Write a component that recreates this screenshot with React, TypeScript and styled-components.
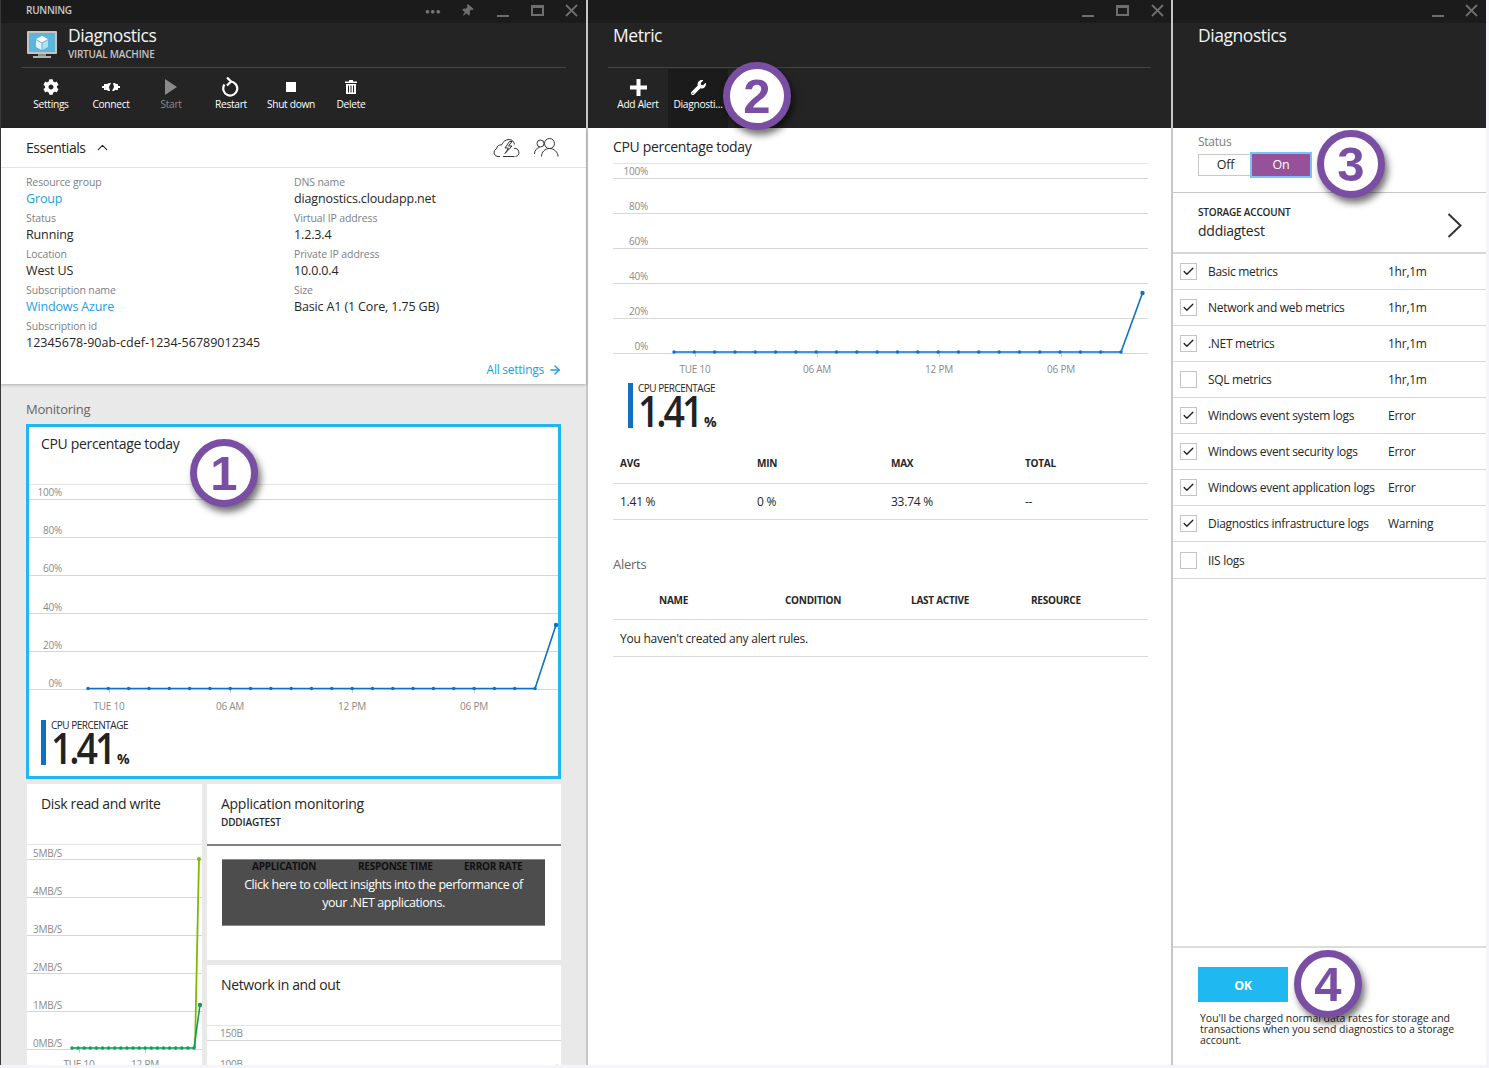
import React from 'react';
import styled, { createGlobalStyle } from 'styled-components';
import { FaCog, FaThumbtack, FaWrench } from 'react-icons/fa';
import { ChevronUp, ArrowRight, Check } from 'lucide-react';

const FONT = `"Open Sans", "Noto Sans", "Liberation Sans", sans-serif`;

const Global = createGlobalStyle`
  html, body { margin: 0; padding: 0; background: #f4f4fa; font-family: ${FONT}; }
  * { box-sizing: border-box; }
`;

const Page = styled.div`
  position: relative;
  display: flex;
  width: 1489px;
  height: 1065px;
  overflow: hidden;
  letter-spacing: -0.25px;
  color: #262626;
`;

const Blade = styled.section<{ $w: number; $edge?: boolean }>`
  width: ${p => p.$w}px;
  flex: none;
  display: flex;
  flex-direction: column;
  height: 100%;
  background: #fff;
  border-left: ${p => (p.$edge ? '1px solid #3a3a3a' : '2px solid #c6c6c6')};
`;

const Header = styled.header`
  height: 128px;
  flex: none;
  background: #242424;
  display: flex;
  flex-direction: column;
`;

const TopBar = styled.div<{ $pad: number }>`
  height: 23px;
  background: #1b1b1b;
  display: flex;
  align-items: center;
  padding-left: ${p => p.$pad}px;
  color: #c8c8c8;
  font-size: 10px;
  font-weight: 600;
`;

const RunningText = styled.span`
  margin-top: -4px;
`;

const WindowControls = styled.div`
  margin-left: auto;
  display: flex;
  align-items: center;
  color: #6e6e6e;
`;

const Control = styled.span<{ $w: number }>`
  width: ${p => p.$w}px;
  height: 23px;
  margin-top: -2px;
  display: flex;
  align-items: center;
  justify-content: center;
`;

const Dots = styled.span`
  font-size: 8px;
  letter-spacing: 0.5px;
  color: #777;
`;

const MinBar = styled.span`
  width: 12px;
  height: 2px;
  margin-top: 10px;
  background: #6e6e6e;
`;

const MaxBox = styled.span`
  width: 13px;
  height: 11px;
  border: 2px solid #6e6e6e;
  border-top-width: 3px;
`;

const TitleRow = styled.div<{ $line?: boolean }>`
  height: 45px;
  margin: 0 20px 0 20px;
  padding-left: 5px;
  border-bottom: 1px solid ${p => (p.$line === false ? 'transparent' : '#444')};
  display: flex;
  gap: 10px;
  color: #fff;
`;

const TitleText = styled.div`
  display: flex;
  flex-direction: column;
  margin-top: -1px;
`;

const VmIconWrap = styled.span`
  display: block;
  height: 30px;
  margin-top: 6px;
`;

const Title = styled.div`
  font-size: 17.5px;
  line-height: 26px;
  color: #f4f4f4;
  letter-spacing: -0.45px;
`;

const Subtitle = styled.div`
  font-size: 10px;
  line-height: 10px;
  margin-top: 1px;
  font-weight: 600;
  color: #c4c4c4;
  letter-spacing: -0.2px;
`;

const Toolbar = styled.div<{ $left: number }>`
  flex: 1;
  display: flex;
  padding-left: ${p => p.$left}px;
  padding-top: 1px;
`;

const ToolButton = styled.div<{ $active?: boolean; $muted?: boolean }>`
  width: 60px;
  display: flex;
  flex-direction: column;
  align-items: center;
  background: ${p => (p.$active ? '#1b1b1b' : 'transparent')};
  color: ${p => (p.$muted ? '#8a8a8a' : '#fff')};
`;

const ToolIcon = styled.span`
  height: 20px;
  margin-top: 8px;
  display: flex;
  align-items: center;
  justify-content: center;
`;

const ToolLabel = styled.span`
  font-size: 10.2px;
  line-height: 14px;
  white-space: nowrap;
  letter-spacing: -0.3px;
`;

const Essentials = styled.div`
  height: 256px;
  flex: none;
  background: #fff;
  box-shadow: 0 1px 3px rgba(0, 0, 0, 0.25);
  display: flex;
  flex-direction: column;
  position: relative;
`;

const EssHead = styled.div`
  height: 40px;
  flex: none;
  border-bottom: 1px solid #e2e2e8;
  display: flex;
  align-items: center;
  padding: 0 27px 0 25px;
  font-size: 14px;
  letter-spacing: -0.45px;
  gap: 8px;
`;

const EssIcons = styled.div`
  margin-left: auto;
  display: flex;
  align-items: center;
  gap: 14px;
  color: #333;
`;

const PropGrid = styled.div`
  display: grid;
  grid-template-columns: 268px 1fr;
  padding: 7px 25px 0;
`;

const PropCol = styled.div`
  display: flex;
  flex-direction: column;
`;

const PropItem = styled.div`
  height: 36px;
  display: flex;
  flex-direction: column;
`;

const PropLabel = styled.span`
  font-size: 10.5px;
  line-height: 14px;
  letter-spacing: -0.12px;
  color: #7c8088;
`;

const PropValue = styled.span<{ $link?: boolean; $wide?: boolean }>`
  font-size: 12.5px;
  line-height: 18px;
  margin-top: 1px;
  letter-spacing: ${p => (p.$wide ? '0' : '-0.14px')};
  color: ${p => (p.$link ? '#1ba1e2' : '#262626')};
`;

const AllSettings = styled.div`
  margin-top: auto;
  padding: 0 24px 7px 0;
  display: flex;
  justify-content: flex-end;
  align-items: center;
  gap: 4px;
  font-size: 12px;
  line-height: 14px;
  color: #1ba1e2;
`;

const Monitoring = styled.div`
  flex: 1;
  background: #e9e9e9;
  padding: 0 0 0 25px;
  min-height: 0;
  overflow: hidden;
`;

const SectionTitle = styled.div`
  height: 40px;
  padding-top: 15px;
  font-size: 13px;
  line-height: 20px;
  color: #666;
`;

const Tile = styled.div`
  background: #fff;
`;

const SelectedTile = styled(Tile)`
  width: 535px;
  height: 355px;
  border: 3px solid #1fb8f0;
`;

const TileTitle = styled.div`
  font-size: 14px;
  line-height: 20px;
  padding: 7px 12px 0;
  letter-spacing: -0.33px;
  color: #262626;
`;

const TileHead = styled.div`
  height: 57px;
  flex: none;
`;

const LowerGrid = styled.div`
  display: grid;
  grid-template-columns: 175px 354px;
  grid-template-rows: 176px 1fr;
  gap: 5px;
  margin: 5px 0 0 1px;
  height: 290px;
`;

const DiskTile = styled(Tile)`
  grid-row: 1 / 3;
  overflow: hidden;
`;

const DiskHead = styled.div`
  height: 60px;
  padding: 10px 14px 0;
  font-size: 14px;
  line-height: 20px;
  letter-spacing: -0.36px;
`;

const AppHead = styled.div`
  height: 62px;
  border-bottom: 2px solid #808080;
  padding: 10px 14px 0;
  font-size: 14px;
  line-height: 20px;
  letter-spacing: -0.28px;
`;

const AppSub = styled.div`
  font-size: 10px;
  font-weight: 600;
  line-height: 14px;
  margin-top: 1px;
  letter-spacing: -0.15px;
`;

const InsightBox = styled.div`
  margin: 13px 16px 0 15px;
  height: 67px;
  background: #4d4d4d;
  border-top: 1px solid #8a8a8a;
  border-bottom: 1px solid #8a8a8a;
  text-align: center;
  color: #fff;
  font-size: 12.5px;
  line-height: 18px;
`;

const InsightCols = styled.div`
  display: flex;
  height: 12px;
  padding-left: 30px;
  color: #111;
  font-size: 10px;
  line-height: 12px;
  font-weight: 700;
`;

const InsightCol = styled.span<{ $w: number }>`
  width: ${p => p.$w}px;
  flex: none;
  text-align: left;
  white-space: nowrap;
`;

const InsightMsg = styled.div`
  padding: 4px 15px 0;
  letter-spacing: -0.45px;
`;

const NetTile = styled(Tile)`
  overflow: hidden;
`;

const ChartSvg = styled.svg`
  display: block;
  overflow: hidden;
  text {
    font-family: ${FONT};
    font-size: 10px;
    fill: #8a8a8a;
  }
`;

const Legend = styled.div`
  display: flex;
  gap: 5px;
  height: 45px;
`;

const LegendBar = styled.div`
  width: 5px;
  height: 45px;
  background: #1070c4;
`;

const LegendBody = styled.div`
  display: flex;
  flex-direction: column;
`;

const LegendLabel = styled.div`
  font-size: 10px;
  line-height: 11px;
  letter-spacing: -0.5px;
  color: #262626;
`;

const LegendValue = styled.div`
  display: flex;
  align-items: baseline;
  height: 34px;
  color: #222;
  white-space: nowrap;
`;

const LegendDigits = styled.span`
  display: inline-block;
  width: 66px;
  font-size: 43px;
  line-height: 34px;
  font-weight: 600;
  letter-spacing: -3.5px;
  transform: scaleX(0.87);
  transform-origin: left center;
`;

const LegendUnit = styled.span`
  font-size: 14px;
  font-weight: 700;
  letter-spacing: 0;
`;

const TileLegend = styled.div`
  padding: 8px 0 0 12px;
`;

const MetricBody = styled.div`
  flex: 1;
  padding: 0 23px 0 25px;
  display: flex;
  flex-direction: column;
`;

const MetricTitle = styled.div`
  height: 35px;
  padding-top: 9px;
  font-size: 14px;
  line-height: 20px;
  letter-spacing: -0.33px;
`;

const MetricLegend = styled.div`
  padding: 5px 0 0 15px;
`;

const DataTable = styled.div<{ $mt: number }>`
  margin-top: ${p => p.$mt}px;
`;

const DataRow = styled.div<{ $h: number; $head?: boolean; $cols: string; $pl: number }>`
  height: ${p => p.$h}px;
  display: grid;
  grid-template-columns: ${p => p.$cols};
  align-items: center;
  padding-left: ${p => p.$pl}px;
  padding-bottom: ${p => (p.$head ? 2 : 0)}px;
  border-bottom: 1px solid #d9d9d9;
  font-size: ${p => (p.$head ? 10 : 12)}px;
  font-weight: ${p => (p.$head ? 700 : 400)};
`;

const AlertsTitle = styled.div`
  margin-top: 35px;
  font-size: 13px;
  line-height: 18px;
  color: #666;
`;

const DiagBody = styled.div`
  flex: 1;
  display: flex;
  flex-direction: column;
  min-height: 0;
`;

const StatusPanel = styled.div`
  height: 65px;
  flex: none;
  padding: 7px 0 0 25px;
  border-bottom: 1px solid #c8c8c8;
`;

const StatusLabel = styled.div`
  font-size: 12px;
  line-height: 14px;
  color: #7c7c7c;
`;

const Toggle = styled.div`
  display: flex;
  margin-top: 5px;
  height: 22px;
`;

const ToggleOff = styled.div`
  width: 54px;
  border: 1px solid #c8c8c8;
  border-right: none;
  font-size: 12.5px;
  line-height: 20px;
  text-align: center;
`;

const ToggleOn = styled.div`
  width: 58px;
  background: #97509a;
  color: #fff;
  font-size: 12.5px;
  line-height: 22px;
  text-align: center;
  box-shadow: 0 0 0 2px #7cc3f5;
`;

const StoragePanel = styled.div`
  height: 61px;
  flex: none;
  padding: 12px 24px 0 25px;
  border-bottom: 2px solid #d6d6d6;
  display: flex;
  align-items: flex-start;
  justify-content: space-between;
`;

const StorageLabel = styled.div`
  font-size: 10px;
  line-height: 14px;
  font-weight: 600;
  letter-spacing: -0.2px;
`;

const StorageValue = styled.div`
  font-size: 14px;
  line-height: 20px;
  margin-top: 2px;
`;

const StorageChevron = styled.span`
  display: block;
  margin-top: 8px;
  color: #333;
`;

const CheckRow = styled.div<{ $last?: boolean }>`
  height: ${p => (p.$last ? 37 : 36)}px;
  flex: none;
  display: flex;
  align-items: center;
  padding-left: 7px;
  border-bottom: 1px solid #d6d6d6;
  font-size: 12px;
`;

const CheckBox = styled.span`
  width: 17px;
  height: 17px;
  flex: none;
  border: 1px solid #c4c4c4;
  display: flex;
  align-items: center;
  justify-content: center;
  color: #222;
`;

const CheckLabel = styled.span`
  width: 180px;
  margin-left: 11px;
  flex: none;
  white-space: nowrap;
  letter-spacing: -0.3px;
`;

const Footer = styled.div`
  margin-top: auto;
  height: 119px;
  flex: none;
  border-top: 2px solid #dcdcdc;
  padding: 19px 24px 0 25px;
`;

const OkButton = styled.div`
  width: 90px;
  height: 35px;
  background: #1fb8f0;
  color: #fff;
  font-size: 12.5px;
  font-weight: 700;
  line-height: 37px;
  text-align: center;
`;

const Note = styled.div`
  margin: 11px 0 0 2px;
  font-size: 10.5px;
  line-height: 11px;
  letter-spacing: -0.03px;
  width: 270px;
  color: #262626;
`;

const Badge = styled.div<{ $x: number; $y: number }>`
  position: absolute;
  left: ${p => p.$x - 34}px;
  top: ${p => p.$y - 34}px;
  width: 68px;
  height: 68px;
  border-radius: 50%;
  background: #fff;
  border: 7px solid #7a4fa3;
  box-shadow: 3px 5px 7px rgba(0, 0, 0, 0.55);
  color: #7a4fa3;
  font-family: "Liberation Sans", sans-serif;
  font-size: 49px;
  font-weight: 700;
  line-height: 54px;
  text-align: center;
  letter-spacing: 0;
`;

type ChartProps = {
  w: number;
  h: number;
  grid: number[];
  labels: { t: string; y: number }[];
  labelX: number;
  anchor?: 'start' | 'end';
  xLabels: { t: string; x: number }[];
  xY: number;
  base: number;
  children?: React.ReactNode;
};

const Chart = ({ w, h, grid, labels, labelX, anchor = 'end', xLabels, xY, base, children }: ChartProps) => (
  <ChartSvg width={w} height={h} viewBox={`0 0 ${w} ${h}`}>
    {grid.map((y, i) => (
      <line key={i} x1={0} x2={w} y1={y + 0.5} y2={y + 0.5} stroke={i === 0 ? '#e6e6e6' : '#d6d6d6'} strokeWidth={1} />
    ))}
    {labels.map(l => (
      <text key={l.t} x={labelX} y={l.y} textAnchor={anchor}>
        {l.t}
      </text>
    ))}
    {xLabels.map(l => (
      <g key={l.t}>
        <line x1={l.x + 0.5} x2={l.x + 0.5} y1={base} y2={base + 4} stroke="#ccc" />
        <text x={l.x} y={xY} textAnchor="middle">
          {l.t}
        </text>
      </g>
    ))}
    {children}
  </ChartSvg>
);

const Series = ({ x0, step, n, y, end, color }: { x0: number; step: number; n: number; y: number; end: [number, number]; color: string }) => {
  const xs = Array.from({ length: n }, (_, i) => x0 + step * i);
  const pts = [...xs.map(x => `${x},${y}`), `${end[0]},${end[1]}`].join(' ');
  return (
    <g>
      <polyline points={pts} fill="none" stroke={color} strokeWidth={1.6} />
      {xs.map(x => (
        <circle key={x} cx={x} cy={y} r={1.7} fill={color} />
      ))}
      <circle cx={end[0]} cy={end[1]} r={2.2} fill={color} />
    </g>
  );
};

const CpuLegend = () => (
  <Legend>
    <LegendBar />
    <LegendBody>
      <LegendLabel>CPU PERCENTAGE</LegendLabel>
      <LegendValue>
        <LegendDigits>1.41</LegendDigits>
        <LegendUnit>%</LegendUnit>
      </LegendValue>
    </LegendBody>
  </Legend>
);

const pct = ['100%', '80%', '60%', '40%', '20%', '0%'];

const VmIcon = () => (
  <svg width="32" height="30" viewBox="0 0 32 30">
    <rect x="1" y="2" width="30" height="23" rx="1" fill="#c4c4c4" />
    <rect x="3" y="4" width="26" height="19" fill="#5cb5db" />
    <rect x="7" y="27" width="18" height="2" fill="#b0b0b0" />
    <rect x="12" y="25" width="8" height="2" fill="#8f8f8f" />
    <polygon points="16,7 22,10 16,13.500 10,10" fill="#fff" />
    <polygon points="10,11 15.500,14.300 15.500,21 10,18" fill="#e4f3fa" />
    <polygon points="22,11 16.500,14.300 16.500,21 22,18" fill="#b5def0" />
  </svg>
);

const ConnectIcon = () => (
  <svg width="18" height="10" viewBox="0 0 18 10" fill="#fff">
    <path d="M0 4h2V2h3l2-1h2L7 5l1 4H6L5 8H2V6H0z" />
    <path d="M18 6h-2v2h-3l-1 1h-2l2-4-1-4h2l1 1h2v2h2z" />
  </svg>
);

const RestartIcon = () => (
  <svg width="18" height="20" viewBox="0 0 18 20" fill="none" stroke="#fff" strokeWidth="2.2">
    <path d="M8 4.500a7 7 0 1 1-5.500 3" />
    <path d="M5 0.500l4 4-4 4" />
  </svg>
);

const TrashIcon = () => (
  <svg width="12" height="14" viewBox="0 0 12 14" fill="#fff">
    <path d="M4 0h4v1.500h4V3H0V1.500h4zM1 4h10v10H1zM3 5.500v7h1v-7zM5.500 5.500v7h1v-7zM8 5.500v7h1v-7z" fillRule="evenodd" />
  </svg>
);

const PlusIcon = () => (
  <svg width="17" height="17" viewBox="0 0 17 17" fill="#fff">
    <path d="M6.500 0h4v6.500h6.500v4h-6.500v6.500h-4v-6.500h-6.500v-4h6.500z" />
  </svg>
);

const XIcon = () => (
  <svg width="13" height="13" viewBox="0 0 13 13" stroke="#6e6e6e" strokeWidth="1.8">
    <path d="M1 1l11 11M12 1L1 12" />
  </svg>
);

const CloudBolt = () => (
  <svg width="27" height="20" viewBox="0 0 27 20" fill="none" stroke="#333" strokeWidth="1">
    <path d="M7 18.500H5a4 4 0 0 1-1.500-7.700C4 8 6 6.500 8.500 7 10 3.500 13 1.500 16 1.500c3 0 5 2 5.500 5" />
    <path d="M21.500 18.500H10M21 10.500a4 4 0 0 1 1.500 8" />
    <path d="M16.500 3.500L12 10h3.500L12 15.500l7-7.500h-3.500L19 3.500z" fill="#fff" />
  </svg>
);

const TwoPeople = () => (
  <svg width="25" height="20" viewBox="0 0 25 20" fill="none" stroke="#333" strokeWidth="1">
    <circle cx="6.500" cy="5.500" r="3.500" />
    <circle cx="15.500" cy="5.500" r="5" />
    <path d="M0.500 16c0-3.500 2-6 5-6.500" />
    <path d="M7.500 18.500c0-4.500 3.500-8 8-8s8.500 3.500 8.500 8" />
  </svg>
);

const BigChevron = () => (
  <svg width="15" height="25" viewBox="0 0 15 25" fill="none" stroke="currentColor" strokeWidth="2">
    <path d="M1.500 1l12 11.500-12 11.500" />
  </svg>
);

const Controls = ({ widths, extras }: { widths: number[]; extras?: boolean }) => (
  <WindowControls>
    {extras && (
      <>
        <Control $w={26}>
          <Dots>●●●</Dots>
        </Control>
        <Control $w={42}>
          <FaThumbtack size={12} style={{ transform: 'rotate(40deg)' }} />
        </Control>
      </>
    )}
    <Control $w={widths[0]}>
      <MinBar />
    </Control>
    {widths.length === 3 && (
      <Control $w={widths[1]}>
        <MaxBox />
      </Control>
    )}
    <Control $w={widths[widths.length - 1]}>
      <XIcon />
    </Control>
  </WindowControls>
);

const props1 = [
  { l: 'Resource group', v: 'Group', link: true },
  { l: 'Status', v: 'Running' },
  { l: 'Location', v: 'West US' },
  { l: 'Subscription name', v: 'Windows Azure', link: true },
  { l: 'Subscription id', v: '12345678-90ab-cdef-1234-56789012345', wide: true },
];
const props2 = [
  { l: 'DNS name', v: 'diagnostics.cloudapp.net' },
  { l: 'Virtual IP address', v: '1.2.3.4' },
  { l: 'Private IP address', v: '10.0.0.4' },
  { l: 'Size', v: 'Basic A1 (1 Core, 1.75 GB)' },
];

const checks = [
  { t: 'Basic metrics', v: '1hr,1m', c: true },
  { t: 'Network and web metrics', v: '1hr,1m', c: true },
  { t: '.NET metrics', v: '1hr,1m', c: true },
  { t: 'SQL metrics', v: '1hr,1m', c: false },
  { t: 'Windows event system logs', v: 'Error', c: true },
  { t: 'Windows event security logs', v: 'Error', c: true },
  { t: 'Windows event application logs', v: 'Error', c: true },
  { t: 'Diagnostics infrastructure logs', v: 'Warning', c: true },
  { t: 'IIS logs', v: '', c: false },
];

const statCols = '137px 134px 134px 1fr';
const alertCols = '126px 126px 120px 1fr';

export default function App() {
  return (
    <Page>
      <Global />
      <Blade $w={586} $edge>
        <Header>
          <TopBar $pad={25}>
            <RunningText>RUNNING</RunningText>
            <Controls widths={[30, 38, 30]} extras />
          </TopBar>
          <TitleRow>
            <VmIconWrap><VmIcon /></VmIconWrap>
            <TitleText>
              <Title>Diagnostics</Title>
              <Subtitle>VIRTUAL MACHINE</Subtitle>
            </TitleText>
          </TitleRow>
          <Toolbar $left={20}>
            <ToolButton>
              <ToolIcon><FaCog size={16} /></ToolIcon>
              <ToolLabel>Settings</ToolLabel>
            </ToolButton>
            <ToolButton>
              <ToolIcon><ConnectIcon /></ToolIcon>
              <ToolLabel>Connect</ToolLabel>
            </ToolButton>
            <ToolButton $muted>
              <ToolIcon>
                <svg width="12" height="16" viewBox="0 0 12 16" fill="#8a8a8a"><path d="M0 0l12 8-12 8z" /></svg>
              </ToolIcon>
              <ToolLabel>Start</ToolLabel>
            </ToolButton>
            <ToolButton>
              <ToolIcon><RestartIcon /></ToolIcon>
              <ToolLabel>Restart</ToolLabel>
            </ToolButton>
            <ToolButton>
              <ToolIcon>
                <svg width="10" height="10" viewBox="0 0 10 10" fill="#fff"><rect width="10" height="10" /></svg>
              </ToolIcon>
              <ToolLabel>Shut down</ToolLabel>
            </ToolButton>
            <ToolButton>
              <ToolIcon><TrashIcon /></ToolIcon>
              <ToolLabel>Delete</ToolLabel>
            </ToolButton>
          </Toolbar>
        </Header>
        <Essentials>
          <EssHead>
            Essentials
            <ChevronUp size={17} strokeWidth={1.5} />
            <EssIcons>
              <CloudBolt />
              <TwoPeople />
            </EssIcons>
          </EssHead>
          <PropGrid>
            <PropCol>
              {props1.map(p => (
                <PropItem key={p.l}>
                  <PropLabel>{p.l}</PropLabel>
                  <PropValue $link={p.link} $wide={p.wide}>{p.v}</PropValue>
                </PropItem>
              ))}
            </PropCol>
            <PropCol>
              {props2.map(p => (
                <PropItem key={p.l}>
                  <PropLabel>{p.l}</PropLabel>
                  <PropValue>{p.v}</PropValue>
                </PropItem>
              ))}
            </PropCol>
          </PropGrid>
          <AllSettings>
            All settings <ArrowRight size={14} strokeWidth={2.4} />
          </AllSettings>
        </Essentials>
        <Monitoring>
          <SectionTitle>Monitoring</SectionTitle>
          <SelectedTile>
            <TileHead>
              <TileTitle>CPU percentage today</TileTitle>
            </TileHead>
            <Chart
              w={529}
              h={228}
              grid={[0, 15, 53, 91, 129, 167, 205]}
              labels={pct.map((t, i) => ({ t, y: 12 + 38.2 * i }))}
              labelX={33}
              xLabels={[
                { t: 'TUE 10', x: 80 },
                { t: '06 AM', x: 201 },
                { t: '12 PM', x: 323 },
                { t: '06 PM', x: 445 },
              ]}
              xY={226}
              base={205}
            >
              <Series x0={59} step={20.32} n={23} y={204.5} end={[527, 141]} color="#1070c4" />
            </Chart>
            <TileLegend>
              <CpuLegend />
            </TileLegend>
          </SelectedTile>
          <LowerGrid>
            <DiskTile>
              <DiskHead>Disk read and write</DiskHead>
              <Chart
                w={175}
                h={221}
                grid={[0, 15, 53, 91, 129, 167, 205]}
                labels={['5MB/S', '4MB/S', '3MB/S', '2MB/S', '1MB/S', '0MB/S'].map((t, i) => ({ t, y: 13 + 38 * i }))}
                labelX={6}
                anchor="start"
                xLabels={[
                  { t: 'TUE 10', x: 52 },
                  { t: '12 PM', x: 118 },
                ]}
                xY={224}
                base={205}
              >
                <polyline points="168,204 172,15" fill="none" stroke="#7fba00" strokeWidth={1.8} />
                <circle cx={172} cy={15} r={2} fill="#7fba00" />
                <Series x0={45} step={6.1} n={21} y={204} end={[173, 161]} color="#0f9d58" />
              </Chart>
            </DiskTile>
            <Tile>
              <AppHead>
                Application monitoring
                <AppSub>DDDIAGTEST</AppSub>
              </AppHead>
              <InsightBox>
                <InsightCols>
                  <InsightCol $w={106}>APPLICATION</InsightCol>
                  <InsightCol $w={106}>RESPONSE TIME</InsightCol>
                  <InsightCol $w={70}>ERROR RATE</InsightCol>
                </InsightCols>
                <InsightMsg>Click here to collect insights into the performance of your .NET applications.</InsightMsg>
              </InsightBox>
            </Tile>
            <NetTile>
              <DiskHead>Network in and out</DiskHead>
              <Chart
                w={354}
                h={45}
                grid={[0, 15]}
                labels={[
                  { t: '150B', y: 12 },
                  { t: '100B', y: 43 },
                ]}
                labelX={13}
                anchor="start"
                xLabels={[]}
                xY={0}
                base={0}
              >
                <circle cx={350} cy={41} r={1.5} fill="#f2a33a" />
              </Chart>
            </NetTile>
          </LowerGrid>
        </Monitoring>
      </Blade>

      <Blade $w={585}>
        <Header>
          <TopBar $pad={25}>
            <Controls widths={[26, 42, 28]} />
          </TopBar>
          <TitleRow>
            <TitleText>
              <Title>Metric</Title>
            </TitleText>
          </TitleRow>
          <Toolbar $left={20}>
            <ToolButton>
              <ToolIcon><PlusIcon /></ToolIcon>
              <ToolLabel>Add Alert</ToolLabel>
            </ToolButton>
            <ToolButton $active>
              <ToolIcon><FaWrench size={15} /></ToolIcon>
              <ToolLabel>Diagnosti...</ToolLabel>
            </ToolButton>
          </Toolbar>
        </Header>
        <MetricBody>
          <MetricTitle>CPU percentage today</MetricTitle>
          <Chart
            w={535}
            h={215}
            grid={[0, 15, 50, 85, 120, 155, 190]}
            labels={pct.map((t, i) => ({ t, y: 12 + 35 * i }))}
            labelX={35}
            xLabels={[
              { t: 'TUE 10', x: 82 },
              { t: '06 AM', x: 204 },
              { t: '12 PM', x: 326 },
              { t: '06 PM', x: 448 },
            ]}
            xY={210}
            base={190}
          >
            <Series x0={61} step={20.32} n={23} y={189} end={[529.5, 130]} color="#1070c4" />
          </Chart>
          <MetricLegend>
            <CpuLegend />
          </MetricLegend>
          <DataTable $mt={17}>
            <DataRow $h={39} $head $cols={statCols} $pl={7}>
              <span>AVG</span><span>MIN</span><span>MAX</span><span>TOTAL</span>
            </DataRow>
            <DataRow $h={36} $cols={statCols} $pl={7}>
              <span>1.41 %</span><span>0 %</span><span>33.74 %</span><span>--</span>
            </DataRow>
          </DataTable>
          <AlertsTitle>Alerts</AlertsTitle>
          <DataTable $mt={10}>
            <DataRow $h={37} $head $cols={alertCols} $pl={46}>
              <span>NAME</span><span>CONDITION</span><span>LAST ACTIVE</span><span>RESOURCE</span>
            </DataRow>
            <DataRow $h={37} $cols="1fr" $pl={7}>
              <span>You haven't created any alert rules.</span>
            </DataRow>
          </DataTable>
        </MetricBody>
      </Blade>

      <Blade $w={315}>
        <Header>
          <TopBar $pad={25}>
            <Controls widths={[36, 30]} />
          </TopBar>
          <TitleRow $line={false}>
            <TitleText>
              <Title>Diagnostics</Title>
            </TitleText>
          </TitleRow>
        </Header>
        <DiagBody>
          <StatusPanel>
            <StatusLabel>Status</StatusLabel>
            <Toggle>
              <ToggleOff>Off</ToggleOff>
              <ToggleOn>On</ToggleOn>
            </Toggle>
          </StatusPanel>
          <StoragePanel>
            <div>
              <StorageLabel>STORAGE ACCOUNT</StorageLabel>
              <StorageValue>dddiagtest</StorageValue>
            </div>
            <StorageChevron>
              <BigChevron />
            </StorageChevron>
          </StoragePanel>
          {checks.map((c, i) => (
            <CheckRow key={c.t} $last={i === checks.length - 1}>
              <CheckBox>{c.c && <Check size={13} strokeWidth={2.5} />}</CheckBox>
              <CheckLabel>{c.t}</CheckLabel>
              <span>{c.v}</span>
            </CheckRow>
          ))}
          <Footer>
            <OkButton>OK</OkButton>
            <Note>You'll be charged normal data rates for storage and transactions when you send diagnostics to a storage account.</Note>
          </Footer>
        </DiagBody>
      </Blade>

      <Badge $x={224} $y={473}>1</Badge>
      <Badge $x={757} $y={96}>2</Badge>
      <Badge $x={1351} $y={164}>3</Badge>
      <Badge $x={1328} $y={984}>4</Badge>
    </Page>
  );
}
